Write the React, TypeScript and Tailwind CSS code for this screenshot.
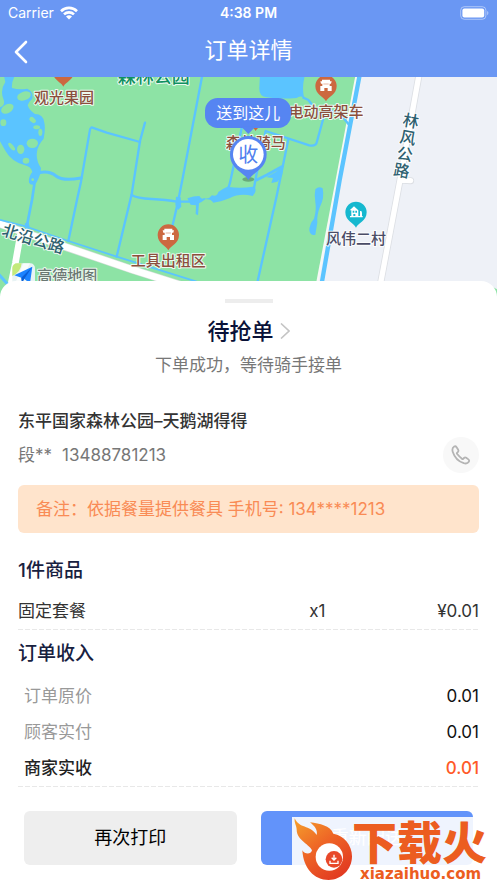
import { ReactNode } from "react";

interface PriceRow {
  label: string;
  value: string;
  highlight?: boolean;
}

const prices: PriceRow[] = [
  { label: "订单原价", value: "0.01" },
  { label: "顾客实付", value: "0.01" },
  { label: "商家实收", value: "0.01", highlight: true },
];

const items = [{ name: "固定套餐", count: 1, price: "¥0.01" }];

function StatusBar() {
  return (
    <div className="grid h-[26px] grid-cols-3 items-center px-2 text-sm text-white">
      <div className="flex items-center gap-1.5">
        <span>Carrier</span>
        <svg className="h-[14px] w-[18px]" viewBox="0 0 18 14" fill="none" stroke="white" strokeWidth="2.6">
          <path d="M1 5.2a11.4 11.4 0 0 1 16 0" />
          <path d="M4 8.4a7.2 7.2 0 0 1 10 0" />
          <path d="M9 13.6 6 10.6a4.3 4.3 0 0 1 6 0z" fill="white" stroke="none" />
        </svg>
      </div>
      <span className="text-center font-semibold">4:38 PM</span>
      <svg className="h-[14px] w-[29px] justify-self-end" viewBox="0 0 29 14">
        <rect x="0.7" y="0.7" width="25.2" height="12.6" rx="3.6" fill="none" stroke="white" strokeOpacity="0.45" />
        <rect x="2.4" y="2.4" width="21.8" height="9.2" rx="2" fill="white" />
        <path d="M27.2 5v4.2c1.6-.6 1.6-3.6 0-4.2z" fill="white" fillOpacity="0.5" />
      </svg>
    </div>
  );
}

function Header() {
  return (
    <header className="bg-[#6a97f3]">
      <StatusBar />
      <div className="grid h-[51px] grid-cols-3 items-center px-2 text-white">
        <button aria-label="返回" className="flex w-8 items-center pl-1.5">
          <svg className="h-6 w-4" viewBox="0 0 16 24" fill="none" stroke="white" strokeWidth="2.6" strokeLinecap="round" strokeLinejoin="round">
            <path d="M12 2 2 12l10 10" />
          </svg>
        </button>
        <h1 className="pb-1 text-center text-[22px] leading-8">订单详情</h1>
      </div>
    </header>
  );
}

function Pin({ x, y, color, children }: { x: number; y: number; color: string; children?: ReactNode }) {
  return (
    <g transform={`translate(${x} ${y})`}>
      <path d="M0 46C-6 32-32 26-32 0a32 32 0 0 1 64 0C32 26 6 32 0 46z" fill={color} />
      {children}
    </g>
  );
}

function Gate() {
  return (
    <path
      fillRule="evenodd"
      d="M-12-19h24v5h5l-2 7h-4v7h6v15H5V6H-5v9h-12V0h6v-7h-4l-2-7h5zM-8-7v2H8v-2z"
      fill="white"
    />
  );
}

// Map is drawn at three units per pixel
function OrderMap() {
  return (
    <svg
      className="block h-[220px] w-full bg-[#eef1f7]"
      viewBox="0 231 1491 660"
      preserveAspectRatio="xMidYMin slice"
      role="img"
      aria-label="地图"
    >
      <path d="M0 231H1070L953 843 943 891H0z" fill="#8de3a5" />
      <path d="M1480 862l11 6v23h-8z" fill="#8de3a5" />

      {/* roads */}
      <g fill="none" strokeLinejoin="round">
        <path d="M1257 225 1200 540 1134 891M1202 540l30 2" stroke="#dcdfe4" strokeWidth="21" strokeLinecap="round" />
        <path d="M1257 225 1200 540 1134 891M1202 540l30 2" stroke="#fff" strokeWidth="16" strokeLinecap="round" />
        <path d="M-10 668 80 700 195 740 400 810 640 886" stroke="#d5ddd9" strokeWidth="24" />
        <path d="M-10 668 80 700 195 740 400 810 640 886M62 700 46 790 25 891" stroke="#fff" strokeWidth="20" />
        <path d="M1070 225 944 891" stroke="#f6f8f6" strokeWidth="7" />
      </g>

      {/* water */}
      <g fill="none" stroke="#5bc4ff" strokeWidth="7" strokeLinejoin="round" strokeLinecap="round">
        <path d="M1079 225 1019 540 958 891" strokeWidth="13" />
        <path d="M607 225 547 540 533 610 518 675" />
        <path d="M435 368 420 423 395 583 350 770" />
        <path d="M420 426 320 398 275 382Q270 383 268 400L243 545 233 590 205 723" />
        <path d="M118 518q30-6 50 10t75 6" strokeWidth="9" />
        <path d="M105 540 96 600 80 680" strokeWidth="8" />
        <path d="M-5 658 80 680 205 723 350 770 590 845 720 880" strokeWidth="5" />
        <path d="M395 585q15 10 60 12t75 8l45 0" strokeWidth="7" />
        <path d="M725 385 690 548 682 575" />
        <path d="M910 293 925 300 960 345 980 330 1018 338 1050 378" />
        <path d="M972 348 950 428Q946 440 928 436L797 393 770 520 760 575" />
        <path d="M865 418 830 588 773 843" />
        <path d="M770 540l30-15 45-25" strokeWidth="8" />
        <path d="M-5 822 30 860" strokeWidth="9" />
      </g>
      <g fill="#5bc4ff">
        <path d="M780 225H915Q905 260 912 292 898 286 890 294 840 298 800 292 776 290 778 262z" />
        <path d="M562 595Q580 588 598 588 605 600 612 594 625 600 636 586 652 590 655 576 668 566 682 560 720 566 758 560 776 566 758 588 720 578 690 594 660 606 640 608 632 596 616 598 606 606 597 610L594 646 587 642 588 616 572 614z" />
        <path d="M828 515q10-14 22-18l-4 30-14 18-18 4 5-15-20-2z" />
        <path d="M946 568q10-10 22-3 6 30-8 55-10 25-8 48l-6 36q-14 4-18-12 0-20 14-36 8-25 4-50-4-20 0-38z" />
        <path d="M12 228h32q-10 20-8 36 20 6 45 2 20 8 16 30-12 10-14 20 4 14 22 26 25 0 28 26 4 18-2 48-18 20-20 40-4 24 12 48 0 20-14 44-14 12-22 0-2-18 10-32-4-16-22-20-40-10-58-42L0 424V322q14-4 12-20-14-30 4-56z" />
        <path d="M74 670l12-2 4 18H76z" />
        <path d="M528 590l14 2 2 28-10 10-8-16z" />
      </g>
      <g fill="#8de3a5">
        <ellipse cx="72" cy="288" rx="21" ry="13" transform="rotate(-18 72 288)" />
        <ellipse cx="22" cy="326" rx="20" ry="13" transform="rotate(-30 22 326)" />
        <ellipse cx="10" cy="368" rx="9" ry="10" />
        <ellipse cx="98" cy="360" rx="11" ry="7" transform="rotate(40 98 360)" />
        <ellipse cx="110" cy="382" rx="10" ry="6" />
        <ellipse cx="121" cy="397" rx="6" ry="11" />
        <ellipse cx="97" cy="430" rx="17" ry="14" />
        <ellipse cx="62" cy="448" rx="11" ry="14" />
        <ellipse cx="78" cy="482" rx="10" ry="9" />
        <ellipse cx="35" cy="440" rx="14" ry="6" transform="rotate(50 35 440)" />
        <circle cx="98" cy="539" r="4" />
      </g>

      <Pin x={190} y={214} color="#cc6840" />
      <Pin x={978} y={258} color="#cc6840">
        <Gate />
      </Pin>
      <Pin x={505} y={705} color="#cc6840">
        <Gate />
      </Pin>
      <Pin x={767} y={347} color="#cc6840" />
      <Pin x={1068} y={637} color="#16b8cf">
        <path fillRule="evenodd" d="M-19-6-6-18 7-6V11h5V-4h4l2 5v10h2v4h-38v-4h4V-6zM-10-5v6h5v-6zM-2-5v6h5v-6zM-8 5v6h6V5z" fill="white" />
      </Pin>

      {/* Amap logo */}
      <g>
        <rect x="37" y="790" width="68" height="68" rx="14" fill="#e8f3f4" />
        <path d="M37 828V804a14 14 0 0 1 14-14h14q-2 26-28 38z" fill="#c3ea7a" />
        <path d="M70 790h20l-34 68H42z" fill="#fff" fillOpacity="0.7" />
        <path d="M43 826 97 800 90 850 72 836 66 848 64 833z" fill="#1b83ff" />
        <path d="M97 800 64 833 66 850 73 836z" fill="#0a5fd6" />
      </g>

      <g
        fontSize="45"
        fontWeight="500"
        textAnchor="middle"
        stroke="#fff"
        strokeOpacity="0.85"
        strokeWidth="6"
        strokeLinejoin="round"
        paintOrder="stroke"
      >
        <text x="461" y="248" fontSize="54" fill="#0f9060">森林公园</text>
        <g fill="#8b4f3d">
          <text x="192" y="309">观光果园</text>
          <text x="978" y="350">电动高架车</text>
          <text x="767" y="445">森林骑马</text>
          <text x="505" y="799">工具出租区</text>
        </g>
        <text x="1068" y="731" fill="#4a4c66">风伟二村</text>
        <g fill="#2d6070" fontSize="48">
          <text transform="translate(95 733) rotate(17)">北沿公路</text>
          <text transform="translate(1230 380) rotate(10)">林</text>
          <text transform="translate(1221 430) rotate(10)">风</text>
          <text transform="translate(1212 480) rotate(10)">公</text>
          <text transform="translate(1202 529) rotate(10)">路</text>
        </g>
        <text x="202" y="842" fill="#6b7873">高德地图</text>
      </g>

      {/* delivery marker */}
      <ellipse cx="745" cy="538" rx="18" ry="7" fill="#000" fillOpacity="0.25" />
      <rect x="615" y="294" width="258" height="90" rx="38" fill="#5685f2" />
      <path d="M724 380h42l-21 22z" fill="#5685f2" />
      <path d="M745 540C733 518 690 508 690 463a55 55 0 0 1 110 0C800 508 757 518 745 540z" fill="#5685f2" />
      <circle cx="745" cy="463" r="46" fill="#fff" />
      <g textAnchor="middle">
        <text x="745" y="357" fontSize="48" fill="#fff">送到这儿</text>
        <text x="745" y="485" fontSize="60" fill="#4f80ee">收</text>
      </g>
    </svg>
  );
}

function DashedLine() {
  return (
    <div className="h-px bg-[repeating-linear-gradient(to_right,#e8e8e8_0_5px,transparent_5px_7px)]" />
  );
}

function Watermark() {
  return (
    <div className="absolute right-0 bottom-0 flex h-[66px] w-[205px] items-start bg-white/90">
      <svg className="h-[66px] w-[60px] shrink-0" viewBox="0 0 180 198">
        <defs>
          <linearGradient id="flame" x1="0" y1="0" x2="0.7" y2="1">
            <stop offset="0" stopColor="#f5a02c" />
            <stop offset="0.5" stopColor="#ee6526" />
            <stop offset="1" stopColor="#e23b22" />
          </linearGradient>
        </defs>
        <path
          d="M8 4C22 36 52 22 74 54 78 38 66 26 54 16 84 20 114 26 124 50 156 56 180 84 180 118 180 158 148 189 110 189 66 189 34 154 31 100 38 112 56 114 60 100 56 84 14 70 14 38 14 26 6 18 8 4z"
          fill="url(#flame)"
        />
        <circle cx="112" cy="120" r="41" fill="white" />
        <circle cx="126" cy="127" r="25" fill="#e8482a" />
        <path d="M126 113v16m-7-7 7 7 7-7M114 131v8h24v-8" fill="none" stroke="white" strokeWidth="4" />
      </svg>
      <div className="flex flex-col pt-1.5 text-[#ec5d20]">
        <span className="text-[45px] leading-[42px] font-black">下载火</span>
        <span className="pl-2 font-['DejaVu_Sans'] text-[15px] leading-[18px] font-bold">xiazaihuo.com</span>
      </div>
    </div>
  );
}

export default function App() {
  return (
    <div className="flex min-h-screen flex-col bg-white font-['Inter','Noto_Sans_CJK_SC',sans-serif]">
      <Header />
      <OrderMap />

      <main className="relative -mt-4 rounded-t-2xl bg-white px-[18px] pt-[18px] text-[17px] leading-6 text-[#333]">
        <div className="mx-auto h-1 w-12 bg-[#ededed]" />

        <button className="mx-auto mt-3 flex items-center gap-1.5 text-[22px] leading-8 font-medium text-[#0a1238]">
          待抢单
          <svg className="h-4 w-2.5" viewBox="0 0 10 16" fill="none" stroke="#c4c4c4" strokeWidth="1.6">
            <path d="M1 0.5 9 8l-8 7.5" />
          </svg>
        </button>
        <p className="mt-1.5 text-center text-[#777]">下单成功，等待骑手接单</p>

        <h2 className="mt-8 font-medium">东平国家森林公园–天鹅湖得得</h2>
        <div className="mt-1 flex items-center justify-between text-[#777]">
          <p className="flex gap-2.5">
            <span>段**</span>
            <span>13488781213</span>
          </p>
          <button aria-label="拨打电话" className="flex size-9 items-center justify-center rounded-full bg-[#f8f8f8]">
            <svg className="size-5" viewBox="0 0 20 20" fill="none" stroke="#b4b4b4" strokeWidth="1.8" strokeLinejoin="round">
              <path d="M3.2 1.6C1.6 2.6 1 4.6 1.8 7c1.6 5 6 9.6 11 11.2 2.2.6 4 .2 5-1.4.6-1 .4-1.8-.4-2.4l-2.2-1.6c-.8-.6-1.6-.4-2.2.2l-.8.8c-.4.4-.8.4-1.2 0C9 12.2 7.4 10.6 6 8.8c-.4-.4-.2-.8.2-1.2l.8-.8c.6-.6.6-1.2.2-2L5.6 2.2c-.6-.8-1.4-1.2-2.4-.6z" />
            </svg>
          </button>
        </div>

        <p className="mt-3 rounded-md bg-[#ffe4cc] px-[18px] py-3 text-[#f98b55]">
          备注：依据餐量提供餐具 手机号: 134****1213
        </p>

        <h2 className="mt-6 text-[19px] leading-7 font-medium text-[#18213f]">{items.length}件商品</h2>
        <ul className="mt-3.5 pb-1.5">
          {items.map((item) => (
            <li key={item.name} className="grid grid-cols-3 items-center">
              <span>{item.name}</span>
              <span className="text-right">x{item.count}</span>
              <span className="text-right">{item.price}</span>
            </li>
          ))}
        </ul>
        <DashedLine />

        <h2 className="mt-2.5 text-[19px] leading-7 font-medium text-[#18213f]">订单收入</h2>
        <dl className="mt-2.5">
          {prices.map((row) => (
            <div key={row.label} className="flex h-9 items-center justify-between pl-1.5">
              <dt className={row.highlight ? "font-medium text-[#222]" : "text-[#999]"}>{row.label}</dt>
              <dd className={row.highlight ? "font-medium text-[#ff5a28]" : "text-[#111]"}>{row.value}</dd>
            </div>
          ))}
        </dl>
        <DashedLine />
      </main>

      <footer className="relative grid grid-cols-2 gap-6 px-6 pt-6 pb-[18px] text-lg">
        <button className="h-[54px] rounded-md bg-[#eee] text-black">再次打印</button>
        <button className="h-[54px] rounded-md bg-[#6293fa] text-white">重新配送</button>
        <Watermark />
      </footer>
    </div>
  );
}
